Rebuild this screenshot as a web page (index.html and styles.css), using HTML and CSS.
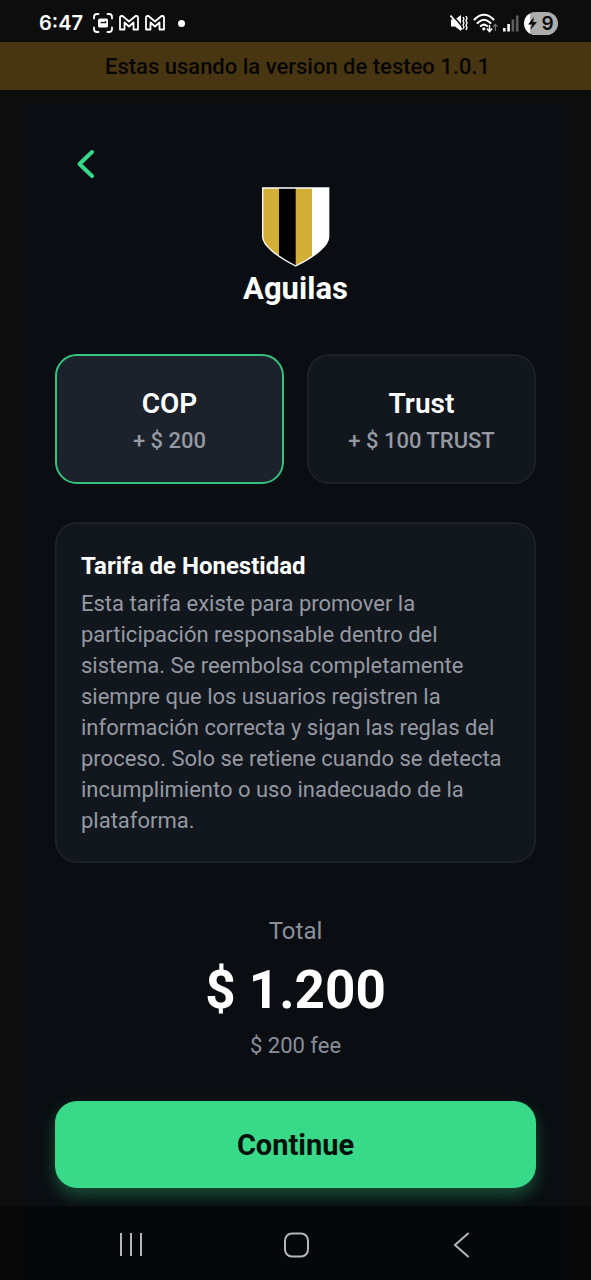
FILE: index.html
```html
<!DOCTYPE html>
<html lang="es">
<head>
<meta charset="utf-8">
<meta name="viewport" content="width=device-width, initial-scale=1">
<title>Aguilas</title>
<link rel="stylesheet" href="styles.css">
</head>
<body>
<div class="screen">
  <header class="status">
    <div class="status-group notifications">
      <span class="clock">6:47</span>
      <svg width="20" height="20" viewBox="0 0 20 20" fill="none" stroke="#fff" stroke-width="1.8" stroke-linecap="round">
        <path d="M1 5.500V4Q1 1 4 1H5.500M14.500 1H16Q19 1 19 4V5.500M19 14.500V16Q19 19 16 19H14.500M5.500 19H4Q1 19 1 16V14.500"/>
        <path fill="#fff" stroke="none" fill-rule="evenodd" d="M7 5.500H13.500Q15 5.500 15 7V13Q15 14.500 13.500 14.500H6.500Q5 14.500 5 13V7.500Q5 5.500 7 5.500ZM6.800 10.200H13.200V7.500L11 9.200L9 8.400Z"/>
      </svg>
      <svg width="20" height="16" viewBox="0 0 20 16" fill="none" stroke="#fff" stroke-width="1.800" stroke-linejoin="round">
        <path d="M1 2.500Q1 1 2.500 1H3.500L10 6.500L16.500 1H17.500Q19 1 19 2.500V14.500H14.500V7.500L10 11.500L5.500 7.500V14.500H1Z"/>
      </svg>
      <svg width="20" height="16" viewBox="0 0 20 16" fill="none" stroke="#fff" stroke-width="1.800" stroke-linejoin="round">
        <path d="M1 2.500Q1 1 2.500 1H3.500L10 6.500L16.500 1H17.500Q19 1 19 2.500V14.500H14.500V7.500L10 11.500L5.500 7.500V14.500H1Z"/>
      </svg>
      <span class="dot"></span>
    </div>
    <div class="status-group">
      <svg width="18" height="18" viewBox="0 0 18 18">
        <path fill="#fff" d="M1 5.500H5L11 1V17L5 12.500H1Z"/>
        <path fill="none" stroke="#0d0d0d" stroke-width="1.500" d="M1.500 0L13.500 14"/>
        <path fill="none" stroke="#fff" stroke-width="1.700" d="M.5 1.500L12 15.500"/>
        <path fill="none" stroke="#fff" stroke-width="1.400" stroke-linejoin="round" d="M13 3L14 5L13 7L14 9L13 11L14 13L13 15M16 2L17 4.300L16 6.700L17 9L16 11.300L17 13.700L16 16"/>
      </svg>
      <svg width="25" height="20" viewBox="0 0 25 20" fill="none" stroke="#fff" stroke-width="2" stroke-linecap="round">
        <path d="M1.500 6.500Q11 -3 20.500 6.500M4.500 10Q11 3.500 17.500 10M7.800 13Q11 10.200 14 13"/>
        <circle cx="10.800" cy="15.800" r="1.600" fill="#fff" stroke="none"/>
        <path stroke-width="1.600" d="M16.500 12.500V18M14.300 16L16.500 18.500L18.700 16"/>
        <path stroke="#777" stroke-width="1.200" d="M22.300 17.500V11.500M20.500 13.300L22.300 11.300L24.100 13.300"/>
      </svg>
      <svg width="16" height="17" viewBox="0 0 16 17">
        <path fill="#fff" d="M0 13h2.600v3.500H0zM4.300 9h2.600v7.500H4.300z"/><path fill="#5e5e5e" d="M8.600 4.500h2.600v12H8.600zM12.900 .5h2.600v16h-2.600z"/>
      </svg>
      <span class="battery">
        <svg width="9" height="13" viewBox="0 0 9 13"><path fill="#0d0d0d" d="M6 0L0 7.500H4L2.500 13L9 5H5.200Z"/></svg>
        <span>9</span>
      </span>
    </div>
  </header>

  <div class="banner">Estas usando la version de testeo 1.0.1</div>

  <main class="panel">
    <button class="back" type="button" aria-label="Volver">
      <svg width="20" height="30" viewBox="0 0 20 30" fill="none" stroke="#36d889" stroke-width="4" stroke-linecap="round" stroke-linejoin="round"><path d="M17 3L4.500 15L17 27"/></svg>
    </button>

    <section class="team">
      <svg width="68" height="80" viewBox="0 0 68 80">
        <defs><clipPath id="shield"><path d="M.7 1H66.700V50C66.700 58 54 69 33.700 79C14 69 .7 58 .7 50Z"/></clipPath></defs>
        <g clip-path="url(#shield)">
          <path fill="#d4af37" d="M0 0H18V80H0ZM33 0H51V80H33Z"/>
          <path fill="#000" d="M17 0H33.700V80H17Z"/>
          <path fill="#fff" d="M50 0H68V80H50Z"/>
        </g>
        <path fill="none" stroke="#fff" stroke-width="1.300" d="M.7 1H66.700V50C66.700 58 54 69 33.700 79C14 69 .7 58 .7 50Z"/>
      </svg>
      <h1 class="team-name">Aguilas</h1>
    </section>

    <div class="options">
      <button class="option selected" type="button" aria-pressed="true">
        <span class="option-name">COP</span>
        <span class="option-fee">+ $ 200</span>
      </button>
      <button class="option" type="button" aria-pressed="false">
        <span class="option-name">Trust</span>
        <span class="option-fee">+ $ 100 TRUST</span>
      </button>
    </div>

    <section class="info">
      <h2 class="info-title">Tarifa de Honestidad</h2>
      <p class="info-text">Esta tarifa existe para promover la participación responsable dentro del sistema. Se reembolsa completamente siempre que los usuarios registren la información correcta y sigan las reglas del proceso. Solo se retiene cuando se detecta incumplimiento o uso inadecuado de la plataforma.</p>
    </section>

    <section class="total">
      <span class="total-label">Total</span>
      <strong class="total-amount">$ 1.200</strong>
      <span class="total-fee">$ 200 fee</span>
    </section>

    <button class="continue" type="button">Continue</button>
  </main>

  <nav class="navbar">
    <button class="nav-button" type="button" aria-label="Recientes">
      <svg width="24" height="24" viewBox="0 0 24 24" fill="none" stroke="#b4b6b7" stroke-width="2"><path d="M2 0V23M12 0V23M22 0V23"/></svg>
    </button>
    <button class="nav-button" type="button" aria-label="Inicio">
      <svg width="26" height="26" viewBox="0 0 26 26" fill="none" stroke="#b4b6b7" stroke-width="2"><rect x="2" y="1.500" width="23" height="23" rx="7"/></svg>
    </button>
    <button class="nav-button" type="button" aria-label="Atrás">
      <svg width="16" height="26" viewBox="0 0 16 26" fill="none" stroke="#b4b6b7" stroke-width="2" stroke-linecap="round"><path d="M15 1.500L2 13L15 24.500"/></svg>
    </button>
  </nav>
</div>
</body>
</html>
```

FILE: styles.css
```css
* {
  box-sizing: border-box;
}

body {
  margin: 0;
  background: #0d0d0d;
  color: #fff;
  font-family: Roboto, "Liberation Sans", sans-serif;
}

button {
  margin: 0;
  padding: 0;
  border: 0;
  background: none;
  color: inherit;
  font: inherit;
  cursor: pointer;
}

svg {
  display: block;
  flex: none;
}

h1, h2, p {
  margin: 0;
}

.screen {
  display: flex;
  flex-direction: column;
  min-height: 100vh;
}

.status {
  display: flex;
  justify-content: space-between;
  align-items: center;
  height: 42px;
  padding: 4px 33px 0 39px;
}

.status-group {
  display: flex;
  align-items: center;
  gap: 5px;
}

.notifications {
  gap: 6px;
}

.clock {
  margin-right: 4px;
  font: 600 20px Inter, Roboto, sans-serif;
}

.dot {
  width: 7px;
  height: 7px;
  margin-left: 7px;
  border-radius: 50%;
  background: #fff;
}

.battery {
  display: flex;
  align-items: center;
  justify-content: center;
  gap: 4px;
  width: 34px;
  height: 23px;
  border-radius: 12px;
  background: linear-gradient(90deg, #fff 6px, #adadad 6px);
  color: #0d0d0d;
  font: 600 19px/23px Inter, Roboto, sans-serif;
}

.banner {
  padding: 11px 16px 9px 20px;
  background: #483612;
  color: #080603;
  font-size: 22px;
  font-weight: 500;
  line-height: 28px;
  text-align: center;
}

.panel {
  flex: 1;
  display: flex;
  flex-direction: column;
  margin: 14px 24px 0;
  padding: 40px 31px 18px;
  background: #0a0e12;
}

.back {
  align-self: flex-start;
  width: 60px;
  height: 40px;
  display: grid;
  place-items: center;
}

.team {
  display: flex;
  flex-direction: column;
  align-items: center;
  padding-top: 3px;
}

.team-name {
  font-size: 31px;
  font-weight: 700;
  line-height: 44px;
}

.options {
  display: grid;
  grid-template-columns: 1fr 1fr;
  gap: 23px;
  margin-top: 43px;
}

.option {
  display: flex;
  flex-direction: column;
  align-items: center;
  justify-content: center;
  height: 130px;
  padding-top: 5px;
  border: 2px solid #1c2027;
  border-radius: 22px;
  background: #12161d;
}

.option.selected {
  border-color: #36c27e;
  background: #1b222b;
}

.option-name {
  font-size: 28px;
  font-weight: 600;
  line-height: 38px;
}

.option-fee {
  color: #9599a2;
  font-size: 22px;
  font-weight: 500;
  line-height: 36px;
}

.info {
  margin-top: 38px;
  padding: 25px 24px;
  border: 2px solid #1c2027;
  border-radius: 22px;
  background: #12161d;
}

.info-title {
  font-size: 24px;
  font-weight: 700;
  line-height: 34px;
}

.info-text {
  margin-top: 5px;
  color: #9599a2;
  font-size: 22px;
  line-height: 31px;
}

.total {
  display: flex;
  flex-direction: column;
  align-items: center;
  margin-top: 50px;
}

.total-label {
  color: #8b8f9b;
  font-size: 24px;
  line-height: 36px;
}

.total-amount {
  font-size: 53px;
  font-weight: 700;
  line-height: 82px;
}

.total-fee {
  color: #8b8f9b;
  font-size: 22px;
  line-height: 30px;
}

.continue {
  height: 87px;
  margin-top: 40px;
  border-radius: 22px;
  background: #38d988;
  box-shadow: 0 8px 16px rgba(56, 217, 136, 0.3);
  color: #04100a;
  font-size: 29px;
  font-weight: 700;
}

.navbar {
  position: relative;
  display: grid;
  grid-template-columns: repeat(3, 1fr);
  height: 74px;
  padding: 3px 48px 0;
  background: linear-gradient(90deg, #080808 24px, #05080b 24px calc(100% - 24px), #080808 calc(100% - 24px));
}

.nav-button {
  display: grid;
  place-items: center;
}
```
